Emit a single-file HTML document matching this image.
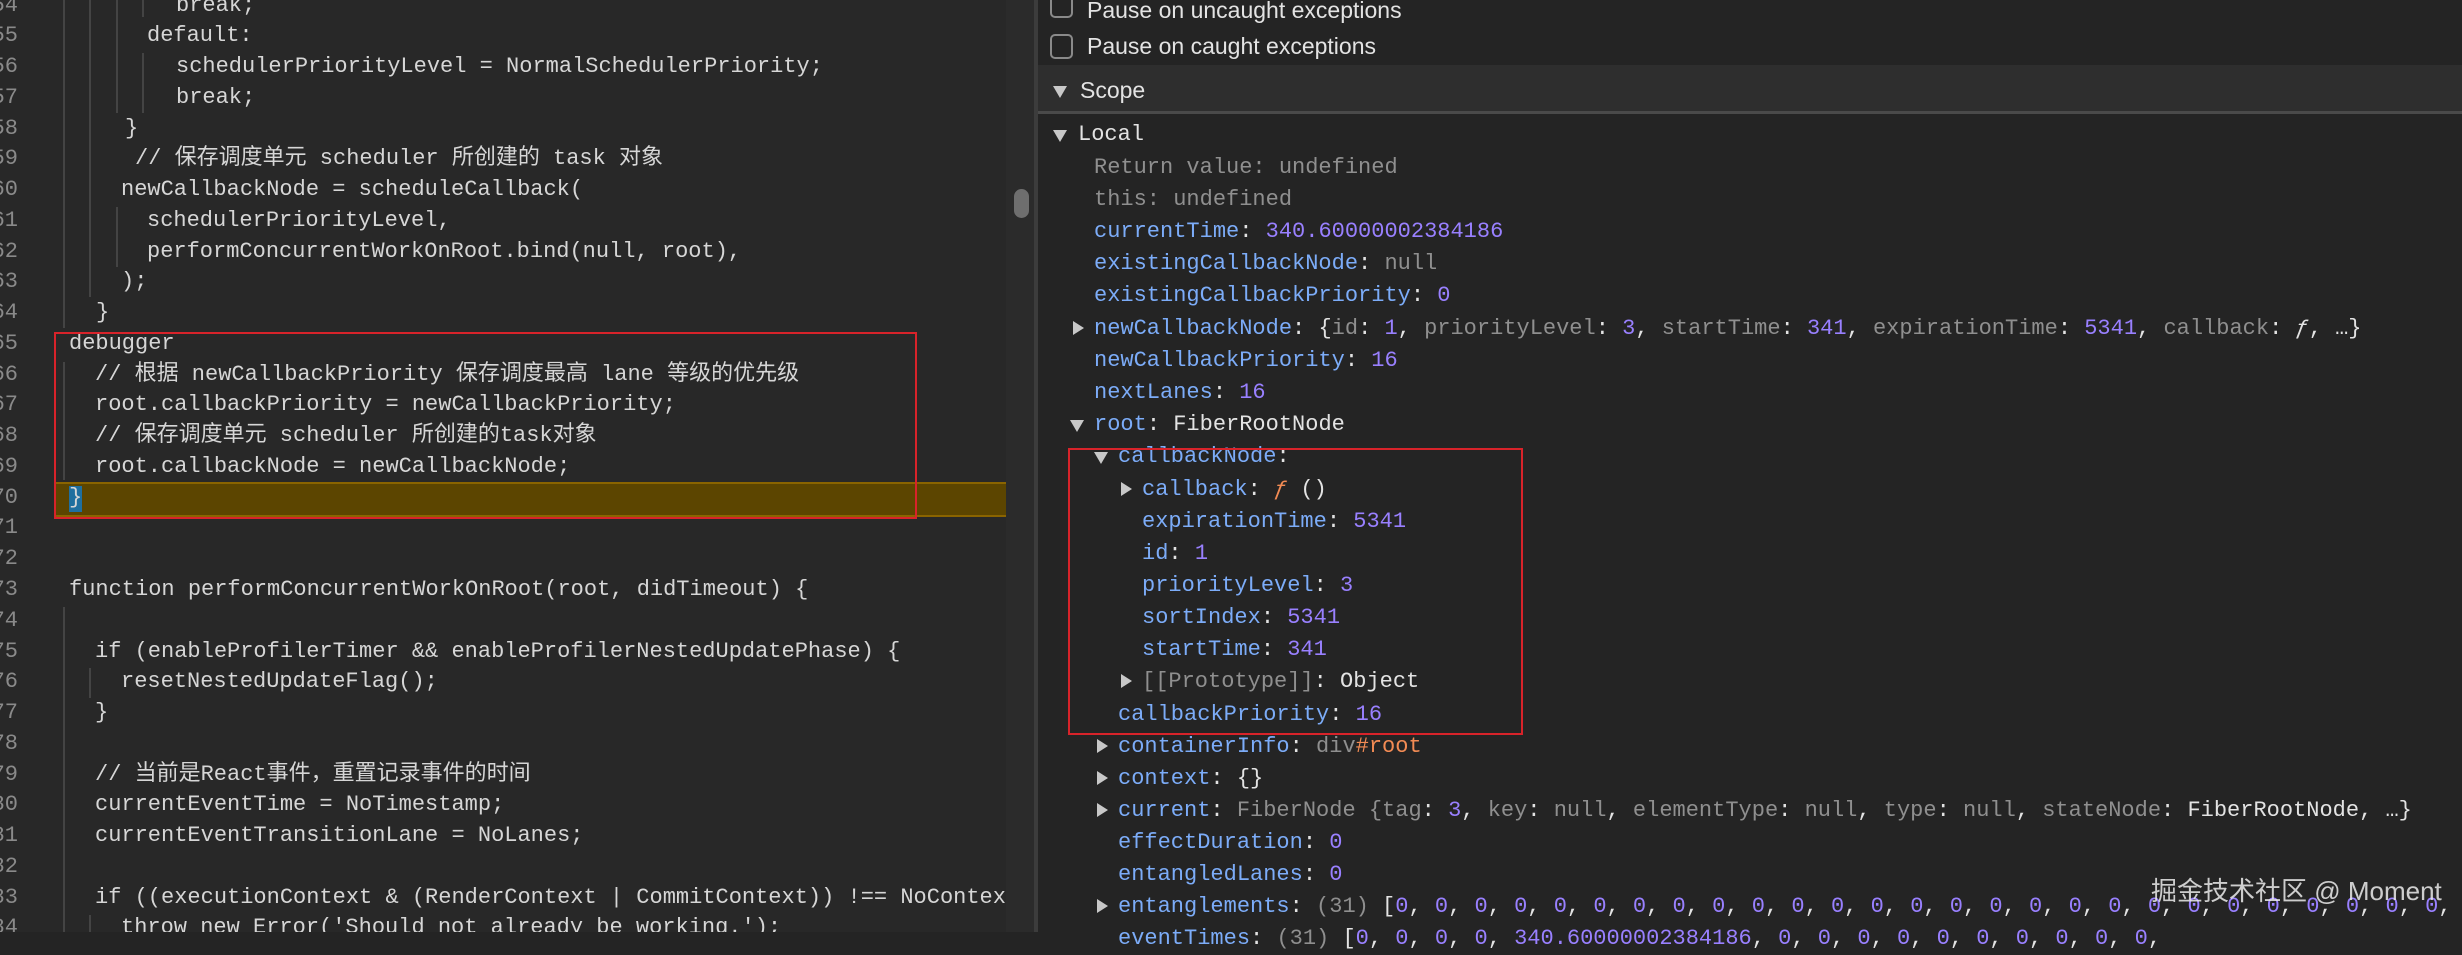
<!DOCTYPE html>
<html><head><meta charset="utf-8"><style>
html,body{margin:0;padding:0;}
body{width:2462px;height:932px;overflow:hidden;background:#242424;position:relative;font-family:"Liberation Mono","Noto Sans CJK SC",monospace;}
#left{position:absolute;left:0;top:0;width:1006px;height:932px;background:#282828;overflow:hidden;}
#track{position:absolute;left:1006px;top:0;width:28px;height:932px;background:#2b2b2b;}
#thumb{position:absolute;left:1014px;top:189px;width:15px;height:29px;border-radius:8px;background:#6e6e6e;}
#div{position:absolute;left:1034px;top:0;width:4px;height:932px;background:#3c3c3c;}
.c{position:absolute;height:31px;line-height:31px;font-size:22px;color:#d6d6d6;white-space:pre;}
.ln{position:absolute;left:-44px;width:62px;text-align:right;height:31px;line-height:31px;font-size:22px;color:#8a8a8a;}
.g{position:absolute;width:2px;background:#444;}
.r{position:absolute;height:32px;line-height:32px;font-size:22px;color:#e3e3e3;white-space:pre;}
.k{color:#7cacf8;}
.v{color:#9980ff;}
.gr{color:#8f8f8f;}
.o{color:#f28b54;}
.t{position:absolute;width:0;height:0;}
.td{border-left:7px solid transparent;border-right:7px solid transparent;border-top:12px solid #c8c8c8;}
.tr{border-top:7px solid transparent;border-bottom:7px solid transparent;border-left:11px solid #c8c8c8;}
.sans{font-family:"Liberation Sans","Noto Sans CJK SC",sans-serif;}
</style></head><body>
<div id="left">
<div style="position:absolute;left:55px;top:482px;width:951px;height:31px;background:#5c4500;border-top:2px solid #8a6400;border-bottom:2px solid #8a6400;"></div>
<div style="position:absolute;left:69px;top:486px;width:13px;height:26px;background:#1f6f9f;"></div>
<div class="g" style="left:63px;top:0;height:328px"></div>
<div class="g" style="left:89px;top:0;height:297px"></div>
<div class="g" style="left:116px;top:0;height:113px"></div>
<div class="g" style="left:116px;top:207px;height:60px"></div>
<div class="g" style="left:142px;top:0;height:17px"></div>
<div class="g" style="left:142px;top:53px;height:60px"></div>
<div class="g" style="left:63px;top:362px;height:118px"></div>
<div class="g" style="left:63px;top:607px;height:325px"></div>
<div class="g" style="left:89px;top:668px;height:30px"></div>
<div class="g" style="left:89px;top:915px;height:20px"></div>

<div class="ln" style="top:-10px">54</div>
<div class="ln" style="top:20px">55</div>
<div class="ln" style="top:51px">56</div>
<div class="ln" style="top:82px">57</div>
<div class="ln" style="top:113px">58</div>
<div class="ln" style="top:143px">59</div>
<div class="ln" style="top:174px">60</div>
<div class="ln" style="top:205px">61</div>
<div class="ln" style="top:236px">62</div>
<div class="ln" style="top:266px">63</div>
<div class="ln" style="top:297px">64</div>
<div class="ln" style="top:328px">65</div>
<div class="ln" style="top:359px">66</div>
<div class="ln" style="top:389px">67</div>
<div class="ln" style="top:420px">68</div>
<div class="ln" style="top:451px">69</div>
<div class="ln" style="top:482px">70</div>
<div class="ln" style="top:512px">71</div>
<div class="ln" style="top:543px">72</div>
<div class="ln" style="top:574px">73</div>
<div class="ln" style="top:605px">74</div>
<div class="ln" style="top:636px">75</div>
<div class="ln" style="top:666px">76</div>
<div class="ln" style="top:697px">77</div>
<div class="ln" style="top:728px">78</div>
<div class="ln" style="top:759px">79</div>
<div class="ln" style="top:789px">80</div>
<div class="ln" style="top:820px">81</div>
<div class="ln" style="top:851px">82</div>
<div class="ln" style="top:882px">83</div>
<div class="ln" style="top:912px">84</div>

<div class="c" style="left:176px;top:-10px">break;</div>
<div class="c" style="left:147px;top:20px">default:</div>
<div class="c" style="left:176px;top:51px">schedulerPriorityLevel = NormalSchedulerPriority;</div>
<div class="c" style="left:176px;top:82px">break;</div>
<div class="c" style="left:125px;top:113px">}</div>
<div class="c" style="left:135px;top:143px">// 保存调度单元 scheduler 所创建的 task 对象</div>
<div class="c" style="left:121px;top:174px">newCallbackNode = scheduleCallback(</div>
<div class="c" style="left:147px;top:205px">schedulerPriorityLevel,</div>
<div class="c" style="left:147px;top:236px">performConcurrentWorkOnRoot.bind(null, root),</div>
<div class="c" style="left:121px;top:266px">);</div>
<div class="c" style="left:96px;top:297px">}</div>
<div class="c" style="left:69px;top:328px">debugger</div>
<div class="c" style="left:95px;top:359px">// 根据 newCallbackPriority 保存调度最高 lane 等级的优先级</div>
<div class="c" style="left:95px;top:389px">root.callbackPriority = newCallbackPriority;</div>
<div class="c" style="left:95px;top:420px">// 保存调度单元 scheduler 所创建的task对象</div>
<div class="c" style="left:95px;top:451px">root.callbackNode = newCallbackNode;</div>
<div class="c" style="left:69px;top:482px">}</div>
<div class="c" style="left:69px;top:574px">function performConcurrentWorkOnRoot(root, didTimeout) {</div>
<div class="c" style="left:95px;top:636px">if (enableProfilerTimer &amp;&amp; enableProfilerNestedUpdatePhase) {</div>
<div class="c" style="left:121px;top:666px">resetNestedUpdateFlag();</div>
<div class="c" style="left:95px;top:697px">}</div>
<div class="c" style="left:95px;top:759px">// 当前是React事件，重置记录事件的时间</div>
<div class="c" style="left:95px;top:789px">currentEventTime = NoTimestamp;</div>
<div class="c" style="left:95px;top:820px">currentEventTransitionLane = NoLanes;</div>
<div class="c" style="left:95px;top:882px">if ((executionContext &amp; (RenderContext | CommitContext)) !== NoContext) {</div>
<div class="c" style="left:121px;top:912px">throw new Error('Should not already be working.');</div>
<div style="position:absolute;left:54px;top:332px;width:859px;height:183px;border:2px solid #d8232a;"></div>
</div>
<div id="track"></div>
<div id="thumb"></div>
<div id="div"></div>

<div style="position:absolute;left:1050px;top:-8px;width:19px;height:22px;border:2px solid #8a8a8a;border-radius:5px;"></div>
<div class="r sans" style="left:1087px;top:-6px;font-size:23px">Pause on uncaught exceptions</div>
<div style="position:absolute;left:1050px;top:34px;width:19px;height:21px;border:2px solid #8a8a8a;border-radius:5px;"></div>
<div class="r sans" style="left:1087px;top:30px;font-size:23px">Pause on caught exceptions</div>
<div style="position:absolute;left:1038px;top:65px;width:1424px;height:46px;background:#2e2e2e;border-bottom:3px solid #4a4a4a;"></div>
<div class="t td" style="left:1053px;top:86px"></div>
<div class="r sans" style="left:1080px;top:74px;font-size:23px">Scope</div>

<div class="t td" style="left:1053px;top:130px"></div>
<div class="r" style="left:1078px;top:119px">Local</div>

<div class="r gr" style="left:1094px;top:152px">Return value: undefined</div>
<div class="r" style="left:1094px;top:184px"><span class="gr">this: undefined</span></div>
<div class="r" style="left:1094px;top:216px"><span class="k">currentTime</span>: <span class="v">340.60000002384186</span></div>
<div class="r" style="left:1094px;top:248px"><span class="k">existingCallbackNode</span>: <span class="gr">null</span></div>
<div class="r" style="left:1094px;top:280px"><span class="k">existingCallbackPriority</span>: <span class="v">0</span></div>
<div class="t tr" style="left:1073px;top:321px"></div>
<div class="r" style="left:1094px;top:313px"><span class="k">newCallbackNode</span>: {<span class="gr">id</span>: <span class="v">1</span>, <span class="gr">priorityLevel</span>: <span class="v">3</span>, <span class="gr">startTime</span>: <span class="v">341</span>, <span class="gr">expirationTime</span>: <span class="v">5341</span>, <span class="gr">callback</span>: <i>ƒ</i>, …}</div>
<div class="r" style="left:1094px;top:345px"><span class="k">newCallbackPriority</span>: <span class="v">16</span></div>
<div class="r" style="left:1094px;top:377px"><span class="k">nextLanes</span>: <span class="v">16</span></div>
<div class="t td" style="left:1070px;top:420px"></div>
<div class="r" style="left:1094px;top:409px"><span class="k">root</span>: FiberRootNode</div>
<div class="t td" style="left:1094px;top:452px"></div>
<div class="r" style="left:1118px;top:441px"><span class="k">callbackNode</span>:</div>
<div class="t tr" style="left:1121px;top:482px"></div>
<div class="r" style="left:1142px;top:474px"><span class="k">callback</span>: <span class="o"><i>ƒ</i></span> ()</div>
<div class="r" style="left:1142px;top:506px"><span class="k">expirationTime</span>: <span class="v">5341</span></div>
<div class="r" style="left:1142px;top:538px"><span class="k">id</span>: <span class="v">1</span></div>
<div class="r" style="left:1142px;top:570px"><span class="k">priorityLevel</span>: <span class="v">3</span></div>
<div class="r" style="left:1142px;top:602px"><span class="k">sortIndex</span>: <span class="v">5341</span></div>
<div class="r" style="left:1142px;top:634px"><span class="k">startTime</span>: <span class="v">341</span></div>
<div class="t tr" style="left:1121px;top:674px"></div>
<div class="r" style="left:1142px;top:666px"><span class="gr">[[Prototype]]</span>: Object</div>
<div class="r" style="left:1118px;top:699px"><span class="k">callbackPriority</span>: <span class="v">16</span></div>
<div class="t tr" style="left:1097px;top:739px"></div>
<div class="r" style="left:1118px;top:731px"><span class="k">containerInfo</span>: <span class="gr">div</span><span class="o">#root</span></div>
<div class="t tr" style="left:1097px;top:771px"></div>
<div class="r" style="left:1118px;top:763px"><span class="k">context</span>: {}</div>
<div class="t tr" style="left:1097px;top:803px"></div>
<div class="r" style="left:1118px;top:795px"><span class="k">current</span>: <span class="gr">FiberNode {tag</span>: <span class="v">3</span>, <span class="gr">key</span>: <span class="gr">null</span>, <span class="gr">elementType</span>: <span class="gr">null</span>, <span class="gr">type</span>: <span class="gr">null</span>, <span class="gr">stateNode</span>: FiberRootNode, …}</div>
<div class="r" style="left:1118px;top:827px"><span class="k">effectDuration</span>: <span class="v">0</span></div>
<div class="r" style="left:1118px;top:859px"><span class="k">entangledLanes</span>: <span class="v">0</span></div>
<div class="t tr" style="left:1097px;top:899px"></div>
<div class="r" style="left:1118px;top:891px"><span class="k">entanglements</span>: <span class="gr">(31)</span> [<span class="v">0</span>, <span class="v">0</span>, <span class="v">0</span>, <span class="v">0</span>, <span class="v">0</span>, <span class="v">0</span>, <span class="v">0</span>, <span class="v">0</span>, <span class="v">0</span>, <span class="v">0</span>, <span class="v">0</span>, <span class="v">0</span>, <span class="v">0</span>, <span class="v">0</span>, <span class="v">0</span>, <span class="v">0</span>, <span class="v">0</span>, <span class="v">0</span>, <span class="v">0</span>, <span class="v">0</span>, <span class="v">0</span>, <span class="v">0</span>, <span class="v">0</span>, <span class="v">0</span>, <span class="v">0</span>, <span class="v">0</span>, <span class="v">0</span>,</div>
<div class="r" style="left:1118px;top:923px"><span class="k">eventTimes</span>: <span class="gr">(31)</span> [<span class="v">0</span>, <span class="v">0</span>, <span class="v">0</span>, <span class="v">0</span>, <span class="v">340.60000002384186</span>, <span class="v">0</span>, <span class="v">0</span>, <span class="v">0</span>, <span class="v">0</span>, <span class="v">0</span>, <span class="v">0</span>, <span class="v">0</span>, <span class="v">0</span>, <span class="v">0</span>, <span class="v">0</span>,</div>

<div style="position:absolute;left:1068px;top:448px;width:451px;height:283px;border:2px solid #d8232a;"></div>
<div class="sans" style="position:absolute;left:2151px;top:874px;font-size:26px;line-height:34px;color:rgba(235,235,235,0.85);white-space:pre;">掘金技术社区 @ Moment</div>
</body></html>
